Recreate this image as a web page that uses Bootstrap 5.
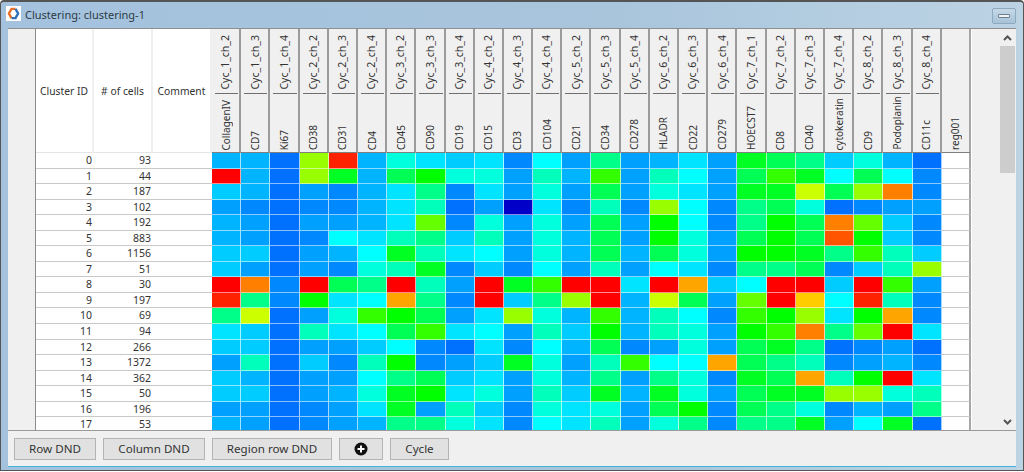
<!DOCTYPE html>
<html lang="en">
<head>
    <meta charset="UTF-8">
    <meta name="viewport" content="width=device-width, initial-scale=1.0">
    <title>Clustering: clustering-1</title>
    <link href="https://cdn.jsdelivr.net/npm/bootstrap@5.3.0/dist/css/bootstrap.min.css" rel="stylesheet">
    <style>
        html, body { height: 472px; overflow: hidden; }
        body { background: #fff; font-family: "Noto Sans", "Liberation Sans", sans-serif; color: #333; }
        .app-window {
            height: 471px; width: 1024px;
            border: 1px solid #555; border-top-width: 2px; border-radius: 4px 4px 0 0;
            background: linear-gradient(90deg, #a4c2de 0%, #a9c5dc 60%, #bcd3e4 100%);
        }
        .title-row { height: 26px; padding: 4px 7px 0 5px; }
        .title-text { font-size: 11px; line-height: 18px; color: #2c3a44; }
        .app-logo { width: 15px; height: 15px; background: #fff; flex: none; }
        .min-btn {
            width: 24px; height: 16px; margin-top: 2px;
            border: 1px solid #8fa9bf; border-radius: 2px;
            background: linear-gradient(#c5d8e7, #a8c2d8);
        }
        .min-btn span { width: 12px; height: 4px; background: #eef3f7; border: 1px solid #6d7d8b; border-radius: 1px; }
        .client-area { margin: 0 7px 3px 7px; background: #f0f0f0; border-bottom: 1px solid #3fb4d8; min-height: 0; }
        .table-zone { height: 403px; border-top: 1px solid #8f8f8f; border-bottom: 1px solid #9a9a9a; overflow: hidden; }
        .row-gutter { width: 28px; flex: none; border-right: 1px solid #8a8a8a; }
        .heat-grid {
            display: grid;
            grid-template-columns: 58px 59px 59px repeat(26, 29.2px);
            grid-template-rows: 65px 59px repeat(18, 15.55px);
            width: 936px; flex: none;
            background: #fff;
        }
        .head-cell { font-size: 10.5px; line-height: 1; color: #333; display: flex; overflow: hidden; }
        .head-plain { grid-row: span 2; align-items: center; justify-content: center; padding-top: 2px; font-size: 10.3px; border-right: 2px solid #f0f0f0; border-bottom: 1px solid #e4e4e4; background: #fff; }
        .head-rot { background: #f0f0f0; border-right: 2px solid #9b9b9b; justify-content: center; padding-bottom: 2px; position: relative; }
        .head-rot span { writing-mode: vertical-rl; transform: rotate(180deg); white-space: nowrap; }
        .head-top { align-items: flex-end; padding-bottom: 4px; }
        .head-top::after { content: ""; position: absolute; left: 3px; right: 1px; bottom: 0; height: 1px; background: #6f6f6f; }
        .head-bottom { align-items: flex-end; font-size: 10px; border-bottom: 1px solid #7f7f7f; }
        .head-last { grid-row: span 2; align-items: flex-end; font-size: 10px; border-bottom: 1px solid #7f7f7f; border-right: 2px solid #a6a6a6; }
        .num-cell { font-size: 10.5px; line-height: 14px; text-align: right; padding-right: 2px; border-bottom: 1px solid #c9c9c9; background: #fff; white-space: nowrap; overflow: hidden; }
        .blank-cell { background: #fff; border-bottom: 1px solid #c9c9c9; }
        .end-cell { background: #fff; border-bottom: 1px solid #c9c9c9; border-right: 2px solid #a6a6a6; }
        .heat-cell { border-right: 1px solid rgba(255,255,255,.65); border-bottom: 1px solid rgba(255,255,255,.55); }
        .scroll-track { width: 15px; flex: none; margin-left: 28px; }
        .scroll-arrow { height: 17px; flex: none; }
        .scroll-thumb { height: 127px; flex: none; background: #cdcdcd; }
        .button-bar { padding: 7px 0 0 6px; gap: 7px; }
        .win-btn {
            height: 22px; padding: 0; border-radius: 0;
            font-size: 11.6px; line-height: 20px; color: #333;
            background: #e1e1e1; border: 1px solid #b4b4b4;
        }
        .btn-row { width: 82px; }
        .btn-col { width: 102px; }
        .btn-region { width: 120px; }
        .btn-plus { width: 44px; }
        .btn-cycle { width: 59px; }
    </style>
</head>
<body>
    <div class="app-window d-flex flex-column">
        <!-- Title bar -->
        <div class="title-row d-flex align-items-start">
            <div class="app-logo d-flex align-items-center justify-content-center">
                <svg width="13" height="13" viewBox="0 0 13 13" fill="none" stroke-width="2.4">
                    <path d="M8.5 1.9 L4.5 1.9 L1.9 6.5 L4.5 11.1" stroke="#e8702a"/>
                    <path d="M4.5 11.1 L8.5 11.1 L11.1 6.5 L8.5 1.9" stroke="#2f6fb5"/>
                </svg>
            </div>
            <div class="title-text ms-1">Clustering: clustering-1</div>
            <div class="min-btn ms-auto d-flex align-items-center justify-content-center"><span></span></div>
        </div>

        <div class="client-area flex-grow-1 d-flex flex-column">
            <div class="table-zone d-flex">
                <div class="row-gutter"></div>
                <div class="heat-grid" id="heat-grid"></div>
                <div class="scroll-track d-flex flex-column">
                    <div class="scroll-arrow d-flex align-items-center justify-content-center">
                        <svg width="9" height="6" viewBox="0 0 9 6"><path d="M1 5 L4.5 1.5 L8 5" fill="none" stroke="#555" stroke-width="2"/></svg>
                    </div>
                    <div class="scroll-thumb"></div>
                    <div class="scroll-arrow mt-auto d-flex align-items-center justify-content-center">
                        <svg width="9" height="6" viewBox="0 0 9 6"><path d="M1 1 L4.5 4.5 L8 1" fill="none" stroke="#555" stroke-width="2"/></svg>
                    </div>
                </div>
            </div>

            <div class="button-bar d-flex">
                <button type="button" class="btn win-btn btn-row">Row DND</button>
                <button type="button" class="btn win-btn btn-col">Column DND</button>
                <button type="button" class="btn win-btn btn-region">Region row DND</button>
                <button type="button" class="btn win-btn btn-plus d-flex align-items-center justify-content-center">
                    <svg width="14" height="14" viewBox="0 0 14 14">
                        <circle cx="7" cy="7" r="6.5" fill="#111"/>
                        <path d="M3.5 7 H10.5 M7 3.5 V10.5" stroke="#fff" stroke-width="2"/>
                    </svg>
                </button>
                <button type="button" class="btn win-btn btn-cycle">Cycle</button>
            </div>
        </div>
    </div>

    <script src="https://cdn.jsdelivr.net/npm/bootstrap@5.3.0/dist/js/bootstrap.bundle.min.js"></script>
    <script>
        const palette = {
            a: '#0000c8', b: '#0070ff', c: '#0088ff', d: '#00a0ff', e: '#00b4ff', f: '#00ccff',
            g: '#00e4ff', h: '#00ffff', i: '#00ffdd', j: '#00ffbb', k: '#00ff88', l: '#00ff55',
            m: '#00ff22', n: '#00ff00', o: '#33ff00', p: '#66ff00', q: '#99ff00', r: '#ccff00',
            s: '#ffcc00', t: '#ffa500', u: '#ff8000', v: '#ff5500', w: '#ff2200', x: '#ff0000'
        };
        const cycles = ['Cyc_1_ch_2','Cyc_1_ch_3','Cyc_1_ch_4','Cyc_2_ch_2','Cyc_2_ch_3','Cyc_2_ch_4','Cyc_3_ch_2','Cyc_3_ch_3','Cyc_3_ch_4','Cyc_4_ch_2','Cyc_4_ch_3','Cyc_4_ch_4','Cyc_5_ch_2','Cyc_5_ch_3','Cyc_5_ch_4','Cyc_6_ch_2','Cyc_6_ch_3','Cyc_6_ch_4','Cyc_7_ch_1','Cyc_7_ch_2','Cyc_7_ch_3','Cyc_7_ch_4','Cyc_8_ch_2','Cyc_8_ch_3','Cyc_8_ch_4'];
        const markers = ['CollagenIV','CD7','Ki67','CD38','CD31','CD4','CD45','CD90','CD19','CD15','CD3','CD104','CD21','CD34','CD278','HLADR','CD22','CD279','HOECST7','CD8','CD40','cytokeratin','CD9','Podoplanin','CD11c'];
        const cellCounts = [93,44,187,102,192,883,1156,51,30,197,69,94,266,1372,362,50,196,53];
        // one letter per column, see palette
        const rows = [
            'eebqweigfgchdkdegdmlkfieb',
            'xebqmelniidjeodjhdlomhlhc',
            'febdcegkcgdidldigdmmrlquc',
            'dcbccegjbdagcjcqhcklibcdd',
            'edbddegpcididldnhcknlupfc',
            'edbchgjkfjdieldnidlnlvnfc',
            'ffbdehmjghdielelidnnmkojf',
            'fdbdcijmcfchdjdhgckklcfjq',
            'xucxlkxjdxmoxxgxtfhxxfxod',
            'wkcnghtkcxfkqxerldpxshwjc',
            'krbdionldgqieoejhconqgntc',
            'gfbjghloghdjfnejidnoukpxg',
            'ffbddfhcbgchelcdidlmkbcdb',
            'djbfcjncdfmidjohhtlkjcdec',
            'febddhklfgdiekdkicmltjnxg',
            'ffbdeimngidjfmemidlmmqqij',
            'ddbcdgmdjfcigidlnclkicedk',
            'edbcdekkigchgjdikckkmdhmb'
        ];
        const grid = document.getElementById('heat-grid');

        function addCell(cls, text) {
            const el = document.createElement('div');
            el.className = cls;
            if (text !== undefined) el.textContent = text;
            grid.appendChild(el);
            return el;
        }
        function addHead(cls, text) {
            const el = addCell('head-cell head-rot ' + cls);
            const label = document.createElement('span');
            label.textContent = text;
            el.appendChild(label);
        }

        ['Cluster ID', '# of cells', 'Comment'].forEach(t => addCell('head-cell head-plain', t));
        cycles.forEach(t => addHead('head-top', t));
        addHead('head-last', 'reg001');
        markers.forEach(t => addHead('head-bottom', t));

        rows.forEach((row, i) => {
            addCell('num-cell', i);
            addCell('num-cell', cellCounts[i]);
            addCell('blank-cell');
            for (let c = 0; c < 25; c++) {
                addCell('heat-cell').style.backgroundColor = palette[row[c]];
            }
            addCell('end-cell');
        });
    </script>
</body>
</html>
